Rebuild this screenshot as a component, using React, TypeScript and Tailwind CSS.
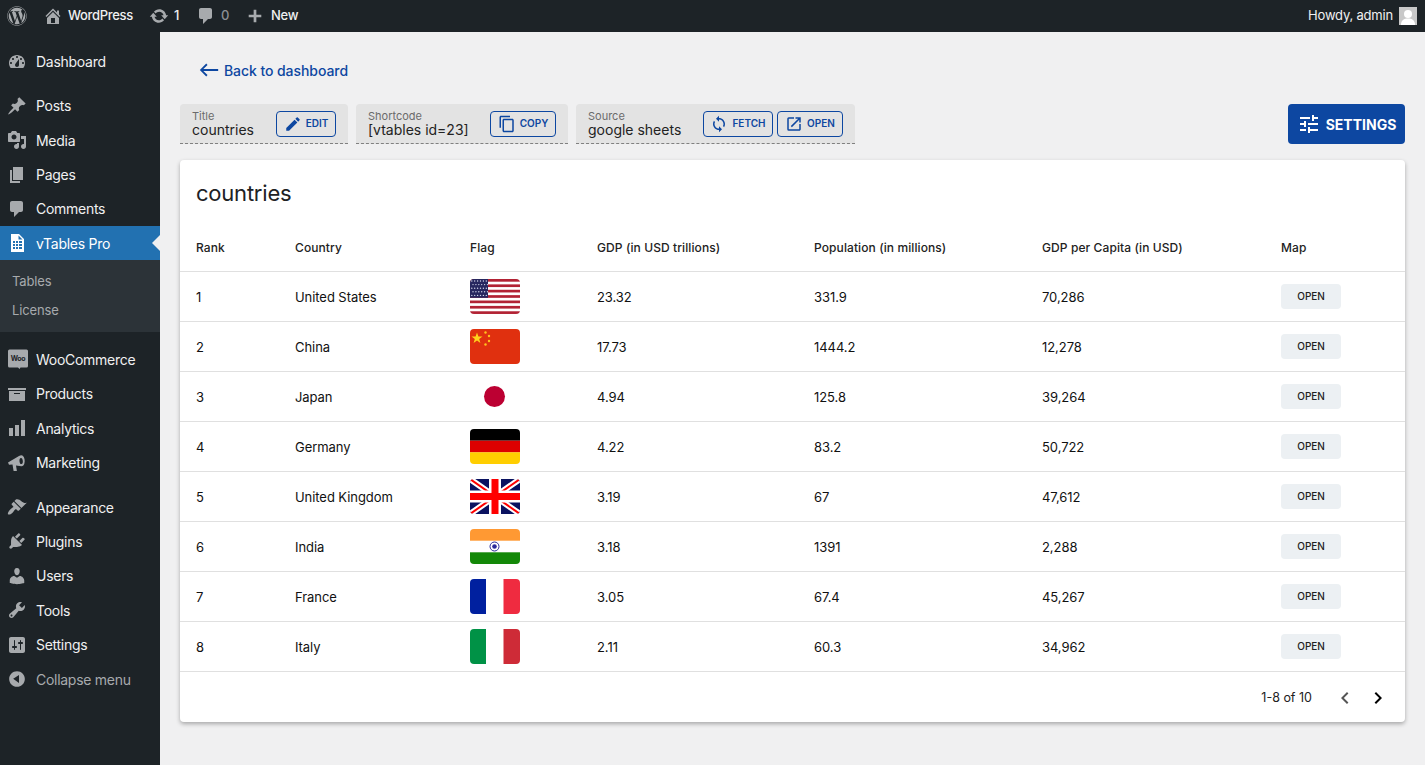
import React from "react";
import { FaWordpress } from "react-icons/fa";
import { MdEdit, MdOutlineContentCopy, MdSync, MdOutlineOpenInNew, MdTune, MdWest, MdChevronLeft, MdChevronRight } from "react-icons/md";

const D = ({ d, className = "" }: { d: string; className?: string }) => (
  <svg viewBox="0 0 20 20" fill="currentColor" className={className}><path d={d} /></svg>
);

const icons: Record<string, string> = {
  dashboard: "M3.76 16h12.48c1.1-1.37 1.76-3.11 1.76-5 0-4.42-3.58-8-8-8s-8 3.58-8 8c0 1.89.66 3.63 1.76 5zM10 4c.55 0 1 .45 1 1s-.45 1-1 1-1-.45-1-1 .45-1 1-1zM6 6c.55 0 1 .45 1 1s-.45 1-1 1-1-.45-1-1 .45-1 1-1zm8 0c.55 0 1 .45 1 1s-.45 1-1 1-1-.45-1-1 .45-1 1-1zm-5.37 5.55L12 7v6c0 1.1-.9 2-2 2s-2-.9-2-2c0-.57.24-1.08.63-1.45zM4 10c.55 0 1 .45 1 1s-.45 1-1 1-1-.45-1-1 .45-1 1-1zm12 0c.55 0 1 .45 1 1s-.45 1-1 1-1-.45-1-1 .45-1 1-1z",
  posts: "M10.44 3.02l1.82-1.82 6.36 6.35-1.83 1.82c-1.05-.68-2.48-.57-3.41.36l-.75.75c-.92.93-1.04 2.35-.35 3.41l-1.83 1.82-2.41-2.41-2.8 2.79c-.42.42-3.38 2.71-3.8 2.29s1.86-3.39 2.28-3.81l2.79-2.79L4.1 9.36l1.83-1.82c1.05.69 2.48.57 3.4-.36l.75-.75c.93-.92 1.05-2.35.36-3.41z",
  media: "M13 11V4c0-.55-.45-1-1-1h-1.67L9 1H5L3.67 3H2c-.55 0-1 .45-1 1v7c0 .55.45 1 1 1h10c.55 0 1-.45 1-1zM7 4.5c1.38 0 2.5 1.12 2.5 2.5S8.38 9.5 7 9.5 4.5 8.38 4.5 7 5.62 4.5 7 4.5zM14 6h5v10.5c0 1.38-1.12 2.5-2.5 2.5S14 17.88 14 16.5s1.12-2.5 2.5-2.5c.17 0 .34.02.5.05V9h-3V6zm-4 8.05V13h2v3.5c0 1.38-1.12 2.5-2.5 2.5S7 17.88 7 16.5 8.12 14 9.5 14c.17 0 .34.02.5.05z",
  pages: "M6 15V2h10v13H6zm-1 1h8v2H3V5h2v11z",
  comments: "M5 2h9c1.1 0 2 .9 2 2v7c0 1.1-.9 2-2 2h-2l-5 5v-5H5c-1.1 0-2-.9-2-2V4c0-1.1.9-2 2-2z",
  vtables: "M4 1h8l5 5v13H4V1zm7.500 1.500V6.500H15.500L11.500 2.500zM6 8v2h2V8H6zm3 0v2h2V8H9zm3 0v2h3V8h-3zM6 11v2h2v-2H6zm3 0v2h2v-2H9zm3 0v2h3v-2h-3zM6 14v2h2v-2H6zm3 0v2h2v-2H9zm3 0v2h3v-2h-3z",
  products: "M19 4v2H1V4h18zM2 7h16v10H2V7zm11 3V9H7v1h6z",
  analytics: "M18 18V2h-4v16h4zm-6 0V7H8v11h4zm-6 0v-8H2v8h4z",
  marketing: "M1 9.500l11-6.500c1.500-1 2.800-1.200 3.800-.3 1.800 1.500 2.400 5.300 1.500 8-.5 1.700-1.500 2.700-3 2.500L9 12.500l.9 5.500H6.600l-1.100-6.500-3.500.3-1-2.300zM14 5c-1.200 0-1.700 1.600-1.500 3.400.2 1.700 1 2.900 2 2.700 1.100-.2 1.500-1.700 1.300-3.400C15.600 6.200 15 5 14 5z",
  appearance: "M14.48 11.06L7.41 3.99l1.5-1.5c.5-.56 2.3-.47 3.51.32 1.21.8 1.43 1.28 2.91 2.1 1.18.64 2.45 1.26 4.45.85zM13.77 11.77L6.7 4.7 4.93 6.47c-.39.39-.39 1.02 0 1.41l1.06 1.06c.39.39.39 1.03 0 1.42-.6.6-1.43 1.11-2.21 1.69-.35.26-.7.53-1.01.84-1.43 1.43-2.4 3.78-1.7 4.47.7.7 3.05-.27 4.48-1.7.31-.31.58-.66.84-1.01.58-.78 1.09-1.61 1.69-2.21.39-.39 1.03-.39 1.42 0l1.06 1.06c.39.39 1.02.39 1.41 0z",
  plugins: "M13.11 4.36L9.87 7.6 8 5.73l3.24-3.24c.35-.34 1.05-.2 1.56.32.52.51.66 1.21.31 1.55zm-8 1.77l.91-1.12 9.01 9.01-1.19.84c-.71.71-2.63 1.16-3.82 1.16H6.14L4.9 17.26c-.59.59-1.54.59-2.12 0-.59-.58-.59-1.53 0-2.12l1.24-1.24v-3.88c0-1.13.4-3.19 1.09-3.89zm7.26 3.97l3.24-3.24c.34-.35 1.04-.21 1.55.31.52.51.66 1.21.31 1.55l-3.24 3.25z",
  users: "M10 9.25c-2.27 0-2.73-3.44-2.73-3.44C7 4.02 7.82 2 9.97 2c2.16 0 2.98 2.02 2.71 3.81 0 0-.41 3.44-2.68 3.44zm0 2.57L12.72 10c2.39 0 4.52 2.33 4.52 4.53v2.49s-3.65 1.13-7.24 1.13c-3.65 0-7.24-1.13-7.24-1.13v-2.49c0-2.25 1.94-4.48 4.47-4.48z",
  tools: "M16.68 9.77c-1.34 1.34-3.3 1.67-4.95.99l-5.41 6.52c-.99.99-2.59.99-3.58 0s-.99-2.59 0-3.57l6.52-5.42c-.68-1.65-.35-3.61.99-4.95 1.28-1.28 3.12-1.62 4.72-1.06l-2.89 2.89 2.82 2.82 2.86-2.87c.53 1.58.18 3.39-1.08 4.65zM3.81 16.21c.4.39 1.04.39 1.43 0 .4-.4.4-1.04 0-1.43-.39-.4-1.03-.4-1.43 0-.39.39-.39 1.03 0 1.43z",
  settings: "M18 16V4c0-1.1-.9-2-2-2H4c-1.1 0-2 .9-2 2v12c0 1.1.9 2 2 2h12c1.1 0 2-.9 2-2zM8 11h1c.55 0 1 .45 1 1s-.45 1-1 1H8v1.5c0 .28-.22.5-.5.5s-.5-.22-.5-.5V13H6c-.55 0-1-.45-1-1s.45-1 1-1h1V5.500c0-.28.22-.5.5-.5s.5.22.5.5V11zm5-2h-1c-.55 0-1-.45-1-1s.45-1 1-1h1V5.500c0-.28.22-.5.5-.5s.5.22.5.5V7h1c.55 0 1 .45 1 1s-.45 1-1 1h-1v5.500c0 .28-.22.5-.5.5s-.5-.22-.5-.5V9z",
  collapse: "M10 2.16c4.33 0 7.84 3.51 7.84 7.84s-3.51 7.84-7.84 7.84S2.160 14.33 2.160 10 5.670 2.160 10 2.160zm2 11.72V6.120L6.180 9.800z",
  home: "M16 8.5l1.53 1.53-1.06 1.06L10 4.62l-6.47 6.47-1.06-1.06L10 2.500l4 4v-2h2v4zm-6-2.460l6 5.990V18H4v-5.970zM12 17v-5H8v5h4z",
  update: "M10.2 3.28c3.53 0 6.43 2.61 6.92 6h2.08l-3.5 4-3.500-4h2.320c-.45-1.970-2.210-3.440-4.320-3.440-1.450 0-2.730.710-3.540 1.780L4.950 5.660C6.230 4.200 8.110 3.280 10.200 3.280zm-.4 13.440c-3.520 0-6.430-2.610-6.920-6H.8l3.500-4c1.170 1.330 2.330 2.670 3.500 4H5.480c.45 1.970 2.210 3.440 4.320 3.440 1.450 0 2.730-.710 3.540-1.780l1.710 1.950c-1.280 1.460-3.150 2.390-5.250 2.390z",
  plus: "M17 8.500v3h-5.500V17h-3v-5.500H3v-3h5.500V3h3v5.500H17z",
};

const Woo = () => (
  <svg viewBox="0 0 20 20" className="w-5 h-5">
    <path d="M1.500 0.500h17A1.500 1.500 0 0 1 20 2v15a1.500 1.500 0 0 1-1.500 1.500h-6l-1 1.500-1.500-1.500H1.500A1.500 1.500 0 0 1 0 17V2a1.500 1.500 0 0 1 1.500-1.500z" fill="#a7aaad" />
    <text x="10" y="12" textAnchor="middle" fontSize="7" fontWeight="700" fill="#1d2327" fontFamily="Inter, sans-serif">Woo</text>
  </svg>
);

const MenuItem = ({ icon, label, h = "h-[34.4px]" }: { icon: string; label: string; h?: string }) => (
  <div className={`${h} flex items-center pl-[7px] text-[14px] tracking-[-0.02em] text-[#f0f0f1]`}>
    {icon === "woo" ? <span className="ml-[1px] -mr-[1px]"><Woo /></span> : <D d={icons[icon]} className="w-5 h-5 text-[#a7aaad]" />}
    <span className="ml-[9px]">{label}</span>
  </div>
);

const Sidebar = () => (
  <aside className="w-[160px] shrink-0 bg-[#1d2327] pt-[12.4px] flex flex-col">
    <MenuItem icon="dashboard" label="Dashboard" />
    <div className="h-[10.2px]" />
    <MenuItem icon="posts" label="Posts" h="h-[34px]" />
    <MenuItem icon="media" label="Media" />
    <MenuItem icon="pages" label="Pages" />
    <MenuItem icon="comments" label="Comments" />
    <div className="relative h-[34px] bg-[#2271b1] flex items-center pl-[7px] text-[14px] tracking-[-0.02em] text-white">
      <D d={icons.vtables} className="w-5 h-5 text-white" />
      <span className="ml-[9px]">vTables Pro</span>
      <span className="absolute right-0 top-[9px] border-y-[8px] border-r-[8px] border-y-transparent border-r-[#f0f0f1]" />
    </div>
    <div className="h-[72px] bg-[#2c3338] pl-3 pt-[7px] flex flex-col text-[13px] tracking-[-0.01em] text-[#a7aaad]">
      <div className="h-[29px] flex items-center">Tables</div>
      <div className="h-[29px] flex items-center">License</div>
    </div>
    <div className="h-[10px]" />
    <MenuItem icon="woo" label="WooCommerce" />
    <MenuItem icon="products" label="Products" />
    <MenuItem icon="analytics" label="Analytics" />
    <MenuItem icon="marketing" label="Marketing" />
    <div className="h-[10.2px]" />
    <MenuItem icon="appearance" label="Appearance" />
    <MenuItem icon="plugins" label="Plugins" />
    <MenuItem icon="users" label="Users" />
    <MenuItem icon="tools" label="Tools" />
    <MenuItem icon="settings" label="Settings" />
    <div className="h-[34.4px] flex items-center pl-[7px] text-[14px] tracking-[-0.02em] text-[#a7aaad]">
      <D d={icons.collapse} className="w-5 h-5 text-[#a7aaad]" />
      <span className="ml-[9px]">Collapse menu</span>
    </div>
  </aside>
);

const TopBar = () => (
  <header className="h-8 shrink-0 bg-[#1d2327] flex items-center justify-between text-[13px] tracking-[-0.025em] text-[#f0f0f1] font-medium">
    <div className="flex items-center">
      <FaWordpress className="ml-[7px] w-5 h-5 text-[#a7aaad]" />
      <D d={icons.home} className="ml-[16px] w-[20px] h-[20px] text-[#a7aaad]" />
      <span className="ml-[5px]">WordPress</span>
      <D d={icons.update} className="ml-[16px] w-[20px] h-[20px] text-[#a7aaad]" />
      <span className="ml-[5px]">1</span>
      <D d={icons.comments} className="ml-[17px] w-[20px] h-[20px] text-[#a7aaad]" />
      <span className="ml-[5px] text-[#8c8f94]">0</span>
      <D d={icons.plus} className="ml-[17px] w-[18px] h-[18px] text-[#a7aaad]" />
      <span className="ml-[7px]">New</span>
    </div>
    <div className="flex items-center pr-2 font-normal">
      <span className="tracking-[-0.015em]">Howdy, admin</span>
      <div className="ml-[6px] w-[18px] h-[18px] bg-[#c8c8c8] overflow-hidden">
        <svg viewBox="0 0 18 18" className="w-full h-full"><circle cx="9" cy="7" r="4" fill="#fff" /><path d="M2 18c0-5 3-6.500 7-6.500s7 1.500 7 6.500z" fill="#fff" /></svg>
      </div>
    </div>
  </header>
);

const OutlineBtn = ({ icon, label, w }: { icon: React.ReactNode; label: string; w: string }) => (
  <div className={`h-[26px] ${w} shrink-0 border border-[#0d47a1] rounded-[4px] flex items-center justify-center gap-1 text-[#0d47a1] text-[10px] font-semibold`}>
    {icon}
    <span>{label}</span>
  </div>
);

const InfoBox = ({ label, value, w, children }: { label: string; value: string; w: string; children: React.ReactNode }) => (
  <div className={`${w} h-10 bg-[#e3e3e3] rounded-t-[4px] border-b border-dashed border-[#808080] pl-3 pr-3 flex items-center justify-between`}>
    <div className="flex flex-col -mt-[1px]">
      <span className="text-[11px] leading-[12px] text-[#6b6b6b] mt-[1px]">{label}</span>
      <span className="text-[14px] leading-[16px] text-[#222]">{value}</span>
    </div>
    <div className="flex gap-1">{children}</div>
  </div>
);

const Flag = ({ children }: { children: React.ReactNode }) => (
  <svg viewBox="0 0 50 35" className="w-[50px] h-[35px] block">
    <defs><clipPath id="fr"><rect width="50" height="35" rx="4" /></clipPath></defs>
    <g clipPath="url(#fr)">{children}</g>
  </svg>
);

const usStripes = [0, 1, 2, 3, 4, 5, 6];
const flags: Record<string, React.ReactNode> = {
  us: (
    <Flag>
      <rect width="50" height="35" fill="#fff" />
      {usStripes.map((i) => <rect key={i} y={i * 5.38} width="50" height="2.69" fill="#b22234" />)}
      <rect width="18" height="18.8" fill="#27275f" />
      {[0, 1, 2, 3, 4].map((row) => [0, 1, 2, 3, 4, 5].map((c) => (
        <circle key={`${row}-${c}`} cx={1.8 + c * 2.9 + (row % 2) * 1.2} cy={2 + row * 3.6} r="0.7" fill="#cfd3e8" />
      )))}
    </Flag>
  ),
  cn: (
    <Flag>
      <rect width="50" height="35" fill="#e0300f" />
      <polygon points="7,3.500 8.400,7.500 12.500,7.500 9.200,10 10.400,14 7,11.600 3.600,14 4.800,10 1.500,7.500 5.600,7.500" fill="#ffd21c" />
      <circle cx="15.500" cy="3.500" r="1.200" fill="#ffc21c" />
      <circle cx="19" cy="7" r="1.200" fill="#ffc21c" />
      <circle cx="19" cy="12" r="1.200" fill="#ffc21c" />
      <circle cx="15.500" cy="15.500" r="1.200" fill="#ffc21c" />
    </Flag>
  ),
  jp: (
    <Flag>
      <rect width="50" height="35" fill="#fff" />
      <circle cx="24.500" cy="17.500" r="10.500" fill="#bc0032" />
    </Flag>
  ),
  de: (
    <Flag>
      <rect width="50" height="11.700" fill="#000" />
      <rect y="11.700" width="50" height="11.700" fill="#dd0000" />
      <rect y="23.300" width="50" height="11.700" fill="#ffce00" />
    </Flag>
  ),
  uk: (
    <Flag>
      <rect width="50" height="35" fill="#0a1260" />
      <path d="M0 0L50 35M50 0L0 35" stroke="#fff" strokeWidth="6" />
      <path d="M0 0L50 35M50 0L0 35" stroke="#f00" strokeWidth="2" />
      <rect x="19" width="12" height="35" fill="#fff" />
      <rect y="11.500" width="50" height="12" fill="#fff" />
      <rect x="21.500" width="7" height="35" fill="#f00" />
      <rect y="14" width="50" height="7" fill="#f00" />
    </Flag>
  ),
  in: (
    <Flag>
      <rect width="50" height="35" fill="#fff" />
      <rect width="50" height="11.700" fill="#ff9933" />
      <rect y="23.300" width="50" height="11.700" fill="#138808" />
      <circle cx="24.500" cy="17.500" r="4.500" fill="none" stroke="#2a2a9a" strokeWidth="1" />
      <circle cx="24.500" cy="17.500" r="2.300" fill="#2a2a9a" />
    </Flag>
  ),
  fr: (
    <Flag>
      <rect width="50" height="35" fill="#fff" />
      <rect width="16" height="35" fill="#00209f" />
      <rect x="33.500" width="16.500" height="35" fill="#ef2b40" />
    </Flag>
  ),
  it: (
    <Flag>
      <rect width="50" height="35" fill="#fff" />
      <rect width="16" height="35" fill="#009246" />
      <rect x="33.500" width="16.500" height="35" fill="#ce2b37" />
    </Flag>
  ),
};

const rows = [
  ["1", "United States", "us", "23.32", "331.9", "70,286"],
  ["2", "China", "cn", "17.73", "1444.2", "12,278"],
  ["3", "Japan", "jp", "4.94", "125.8", "39,264"],
  ["4", "Germany", "de", "4.22", "83.2", "50,722"],
  ["5", "United Kingdom", "uk", "3.19", "67", "47,612"],
  ["6", "India", "in", "3.18", "1391", "2,288"],
  ["7", "France", "fr", "3.05", "67.4", "45,267"],
  ["8", "Italy", "it", "2.11", "60.3", "34,962"],
];

const grid = "grid grid-cols-[99px_175px_127px_217px_228px_239px_140px] items-center border-b border-[#e0e0e0] [&>*]:pl-4";

const Card = () => (
  <section className="mt-4 h-[562px] bg-white rounded-[4px] shadow-[0_2px_4px_rgba(0,0,0,0.3)] flex flex-col">
    <h2 className="pl-4 pt-[18px] text-[22px] leading-[30px] tracking-[-0.01em] text-[#202124] h-[62px]">countries</h2>
    <div className={`${grid} h-[50px] pt-[2px] text-[12px] tracking-[0.008em] font-medium text-[#222]`}>
      {["Rank", "Country", "Flag", "GDP (in USD trillions)", "Population (in millions)", "GDP per Capita (in USD)", "Map"].map((h) => (
        <div key={h}>{h}</div>
      ))}
    </div>
    {rows.map((row) => (
      <div key={row[0]} className={`${grid} h-[50px] text-[13px] tracking-[-0.005em] text-[#111]`}>
        <div className="pt-[2px]">{row[0]}</div>
        <div className="pt-[2px]">{row[1]}</div>
        <div>{flags[row[2]]}</div>
        <div className="pt-[2px]">{row[3]}</div>
        <div className="pt-[2px]">{row[4]}</div>
        <div className="pt-[2px]">{row[5]}</div>
        <div>
          <div className="w-[60px] h-[25px] rounded-[4px] bg-[#ecf0f3] flex items-center justify-center text-[10px] font-medium text-[#222]">OPEN</div>
        </div>
      </div>
    ))}
    <div className="flex-1 flex items-center justify-end pt-[2px] text-[12.5px] text-[#222]">
      <span>1-8 of 10</span>
      <MdChevronLeft className="ml-[21px] w-6 h-6 text-[#555]" />
      <MdChevronRight className="ml-[9px] mr-[15px] w-6 h-6 text-black" />
    </div>
  </section>
);

export default function App() {
  return (
    <div className="h-screen w-full overflow-hidden flex flex-col bg-[#f0f0f1] font-['Inter',sans-serif]">
      <TopBar />
      <div className="flex flex-1 min-h-0">
        <Sidebar />
        <main className="flex-1 px-5">
          <div className="h-[72px] flex items-center pl-[18px] pt-[4px] text-[#0d47a1] text-[14px] tracking-[-0.005em] font-medium">
            <MdWest className="w-[22px] h-[22px]" />
            <span className="ml-[4px]">Back to dashboard</span>
          </div>
          <div className="flex items-start justify-between">
            <div className="flex gap-2">
              <InfoBox label="Title" value="countries" w="w-[168px]">
                <OutlineBtn icon={<MdEdit className="w-[18px] h-[18px]" />} label="EDIT" w="w-[60px]" />
              </InfoBox>
              <InfoBox label="Shortcode" value="[vtables id=23]" w="w-[212px]">
                <OutlineBtn icon={<MdOutlineContentCopy className="w-[18px] h-[18px]" />} label="COPY" w="w-[66px]" />
              </InfoBox>
              <InfoBox label="Source" value="google sheets" w="w-[279px]">
                <OutlineBtn icon={<MdSync className="w-[18px] h-[18px]" />} label="FETCH" w="w-[70px]" />
                <OutlineBtn icon={<MdOutlineOpenInNew className="w-[18px] h-[18px]" />} label="OPEN" w="w-[66px]" />
              </InfoBox>
            </div>
            <div className="w-[117px] h-10 bg-[#0d47a1] rounded-[4px] flex items-center justify-center gap-[5px] text-white text-[14px] font-bold">
              <MdTune className="w-[24px] h-[24px]" />
              <span>SETTINGS</span>
            </div>
          </div>
          <Card />
        </main>
      </div>
    </div>
  );
}
